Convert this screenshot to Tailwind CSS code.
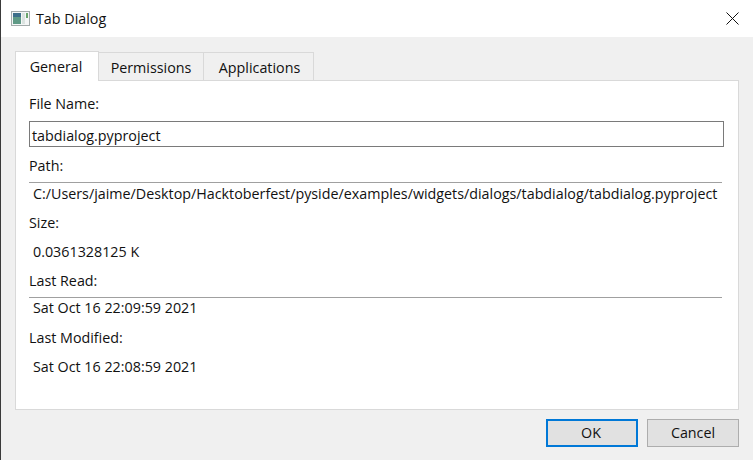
<!DOCTYPE html>
<html lang="en">
<head>
    <meta charset="UTF-8">
    <title>Tab Dialog</title>
    <script src="https://cdn.jsdelivr.net/npm/@tailwindcss/browser@4"></script>
</head>
<body class="w-[753px] h-[460px] overflow-hidden bg-[#f0f0f0] text-[14.3px] text-[#111] font-['Open_Sans',sans-serif]">
<div class="h-full flex flex-col border-l border-[#3a3a3a]">

    <!-- title bar -->
    <div class="h-[37px] bg-white flex items-center pl-[10px] pr-[14px]">
        <svg width="19" height="15" viewBox="0 0 19 15" class="mr-[6px]">
            <rect x="0.5" y="0.5" width="18" height="14" fill="#f4f6f6" stroke="#a3abab"/>
            <rect x="2" y="2" width="8" height="11" fill="#5f9a86"/>
            <rect x="2" y="2" width="8" height="4" fill="#3d6f8a"/>
            <rect x="11" y="2" width="3" height="11" fill="#dbe3e0"/>
            <rect x="15" y="2" width="2" height="5" fill="#69a56b"/>
        </svg>
        <span>Tab Dialog</span>
        <svg width="13" height="13" viewBox="0 0 13 13" class="ml-auto" fill="none" stroke="#111">
            <path d="M0.5 0.5 12.5 12.5M12.5 0.5 0.5 12.5"/>
        </svg>
    </div>

    <!-- tabs -->
    <div class="flex items-end h-[43px] pl-[14px]">
        <div class="h-[30px] w-[84px] flex items-center justify-center bg-white border border-b-0 border-[#d9d9d9] relative top-[1px] z-10 pr-[2px]">General</div>
        <div class="h-[28px] w-[105px] flex items-center justify-center bg-[#f0f0f0] border border-l-0 border-b-0 border-[#d9d9d9] pt-[2px]">Permissions</div>
        <div class="h-[28px] w-[110px] flex items-center justify-center bg-[#f0f0f0] border border-l-0 border-b-0 border-[#d9d9d9] pt-[2px] pl-[2px]">Applications</div>
    </div>

    <!-- page -->
    <div class="ml-[14px] w-[724px] h-[330px] bg-white border border-[#d9d9d9] px-[13px] pt-[14px] flex flex-col">
        <div class="h-[18px] leading-[18px]">File Name:</div>
        <div class="mt-[8px] h-[26px] w-[695px] border border-[#7a7a7a] pl-[2px] leading-[27px]">tabdialog.pyproject</div>
        <div class="mt-[10px] h-[18px] leading-[18px]">Path:</div>
        <div class="mt-[7px] w-[693px] border-t border-[#a0a0a0] h-[23px] leading-[22px] pl-[4px] whitespace-nowrap">C:/Users/jaime/Desktop/Hacktoberfest/pyside/examples/widgets/dialogs/tabdialog/tabdialog.pyproject</div>
        <div class="mt-[9px] h-[18px] leading-[18px]">Size:</div>
        <div class="mt-[11px] h-[18px] leading-[18px] pl-[4px]">0.0361328125 K</div>
        <div class="mt-[11px] h-[18px] leading-[18px]">Last Read:</div>
        <div class="mt-[7px] w-[693px] border-t border-[#a0a0a0] h-[21px] leading-[20px] pl-[4px]">Sat Oct 16 22:09:59 2021</div>
        <div class="mt-[11px] h-[18px] leading-[18px]">Last Modified:</div>
        <div class="mt-[11px] h-[18px] leading-[18px] pl-[4px]">Sat Oct 16 22:08:59 2021</div>
    </div>

    <!-- buttons -->
    <div class="flex justify-end gap-[9px] pr-[14px] pt-[9px]">
        <button class="w-[92px] h-[28px] bg-[#e1e1e1] border-2 border-[#0078d7] pr-[2px]">OK</button>
        <button class="w-[92px] h-[28px] bg-[#e1e1e1] border border-[#adadad]">Cancel</button>
    </div>
</div>
</body>
</html>
